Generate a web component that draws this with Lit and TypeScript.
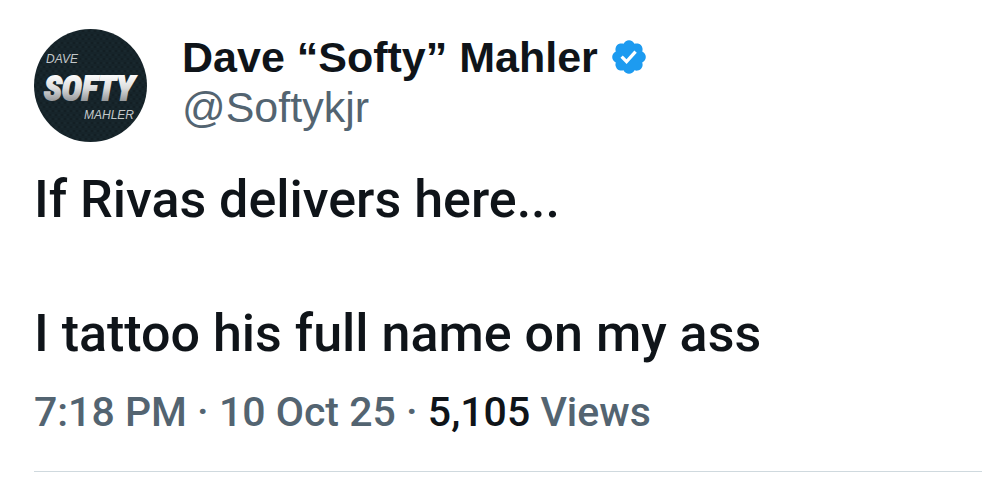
import { LitElement, html, css } from "lit";
import { customElement } from "lit/decorators.js";

@customElement("user-avatar")
class UserAvatar extends LitElement {
  static styles = css`
    :host {
      display: block;
      flex: none;
    }
    .disc {
      display: block;
      width: 113px;
      height: 113px;
    }
    .small {
      font: italic 12px "Liberation Sans", Arial, sans-serif;
      fill: #c3c8ca;
    }
    .big {
      font: italic 700 34px "Liberation Sans Narrow", "Roboto Condensed", "Liberation Sans", sans-serif;
      fill: url(#metal);
      stroke: url(#metal);
      stroke-width: 2;
    }
  `;
  render() {
    return html`
      <svg class="disc" viewBox="0 0 113 113" role="img" aria-label="Dave Softy Mahler">
        <defs>
          <linearGradient id="metal" x1="0" y1="0" x2="0" y2="1">
            <stop offset="0.2" stop-color="#fafafa" />
            <stop offset="0.5" stop-color="#dcdddd" />
            <stop offset="0.8" stop-color="#999c9f" />
          </linearGradient>
          <pattern id="mesh" width="6" height="8" patternUnits="userSpaceOnUse">
            <rect width="6" height="8" fill="#16242a" />
            <path d="M1 1v2M4 5v2" stroke="#111d22" stroke-width="1.5" />
            <path d="M4 1v2M1 5v2" stroke="#1b2b31" stroke-width="1" />
          </pattern>
        </defs>
        <circle cx="56.5" cy="56.5" r="56.5" fill="url(#mesh)" />
        <text class="small" x="12" y="34">DAVE</text>
        <text class="big" x="10" y="71">SOFTY</text>
        <text class="small" x="50" y="90">MAHLER</text>
      </svg>
    `;
  }
}

@customElement("app-root")
class AppRoot extends LitElement {
  static styles = css`
    :host {
      display: block;
      background: #fff;
      color: #0f1419;
      font-family: Roboto, "Liberation Sans", sans-serif;
    }
    .post {
      padding: 29px 0 0 34px;
    }
    .author {
      display: flex;
      gap: 35px;
    }
    .names {
      display: flex;
      flex-direction: column;
      padding-top: 3px;
      font-family: "Liberation Sans", Arial, sans-serif;
      font-size: 43px;
      line-height: 50px;
    }
    .line {
      display: flex;
      align-items: center;
      gap: 14px;
    }
    a {
      color: inherit;
      text-decoration: none;
    }
    .name {
      font-weight: 700;
    }
    .handle {
      color: #536471;
    }
    .badge {
      width: 34px;
      height: 34px;
      flex: none;
    }
    .body {
      margin: 24px 0 0;
      font-size: 52px;
      font-weight: 500;
      line-height: 67px;
      white-space: pre-wrap;
    }
    .meta {
      padding: 15px 0 29px;
      border-bottom: 1px solid #cfd9de;
      font-size: 41px;
      font-weight: 500;
      line-height: 60px;
      color: #536471;
    }
    .count {
      color: #0f1419;
    }
  `;
  render() {
    return html`
      <article class="post">
        <header class="author">
          <user-avatar></user-avatar>
          <div class="names">
            <div class="line">
              <a class="name" href="#profile">Dave “Softy” Mahler</a>
              <svg class="badge" viewBox="1.5 1.5 19 19" role="img" aria-label="Verified account">
                <path
                  fill="#1d9bf0"
                  d="M20.396 11c-.018-.646-.215-1.275-.57-1.816-.354-.54-.852-.972-1.438-1.246.223-.607.27-1.264.14-1.897-.131-.634-.437-1.218-.882-1.687-.47-.445-1.053-.75-1.687-.882-.633-.13-1.29-.083-1.897.14-.273-.587-.704-1.086-1.245-1.44S11.647 1.62 11 1.604c-.646.017-1.273.213-1.813.568s-.969.854-1.24 1.44c-.608-.223-1.267-.272-1.902-.14-.635.13-1.22.436-1.69.882-.445.47-.749 1.055-.878 1.688-.13.633-.08 1.29.144 1.896-.587.274-1.087.705-1.443 1.245-.356.54-.555 1.17-.574 1.817.02.647.218 1.276.574 1.817.356.54.856.972 1.443 1.245-.224.606-.274 1.263-.144 1.896.13.634.433 1.218.877 1.688.47.443 1.054.747 1.687.878.633.132 1.29.084 1.897-.136.274.586.705 1.084 1.246 1.439.54.354 1.17.551 1.816.569.647-.016 1.276-.213 1.817-.567s.972-.854 1.245-1.44c.604.239 1.266.296 1.903.164.636-.132 1.22-.447 1.68-.907.46-.46.776-1.044.908-1.681s.075-1.299-.165-1.903c.586-.274 1.084-.705 1.439-1.246.354-.54.551-1.17.569-1.816zM9.662 14.85l-3.429-3.428 1.293-1.302 2.072 2.072 4.4-4.794 1.347 1.246z"
                />
              </svg>
            </div>
            <a class="handle" href="#profile">@Softykjr</a>
          </div>
        </header>
        <p class="body">If Rivas delivers here...

I tattoo his full name on my ass</p>
        <footer class="meta">
          <time datetime="2025-10-10T19:18">7:18 PM · 10 Oct 25</time> ·
          <a href="#views"><span class="count">5,105</span> Views</a>
        </footer>
      </article>
    `;
  }
}
